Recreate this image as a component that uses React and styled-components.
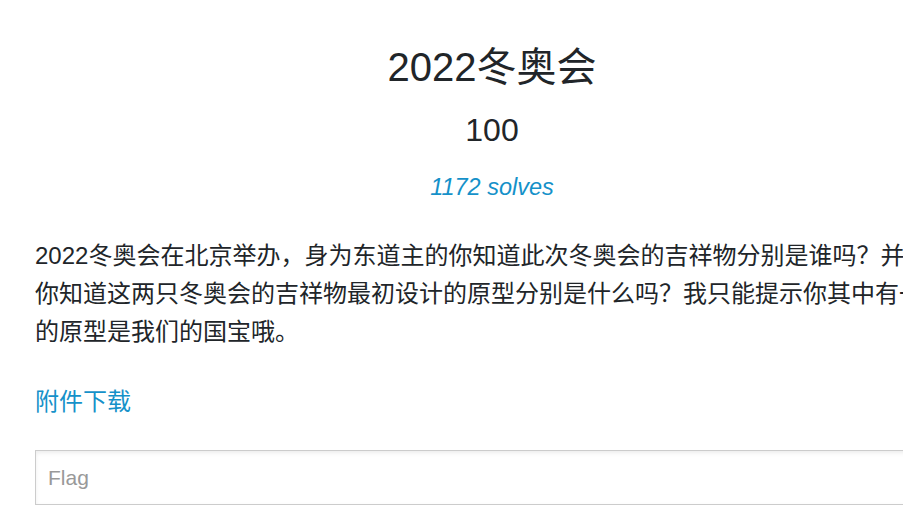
import styled, { createGlobalStyle } from 'styled-components';

const GlobalStyle = createGlobalStyle`
  html, body {
    margin: 0;
    padding: 0;
    overflow: hidden;
    background: #ffffff;
  }
  body {
    font-family: "Liberation Sans", "Noto Sans CJK SC", sans-serif;
    color: #212529;
  }
`;

const Challenge = () => {
  return (
    <StModal>
      <StTitle>2022冬奥会</StTitle>
      <StValue>100</StValue>
      <StSolves href="#solves">1172 solves</StSolves>
      <StDesc>
        2022冬奥会在北京举办，身为东道主的你知道此次冬奥会的吉祥物分别是谁吗？并且你知道这两只冬奥会的吉祥物最初设计的原型分别是什么吗？我只能提示你其中有一只的原型是我们的国宝哦。
      </StDesc>
      <StLink href="#file">附件下载</StLink>
      <StInput type="text" placeholder="Flag" />
    </StModal>
  );
};

const App = () => (
  <>
    <GlobalStyle />
    <Challenge />
  </>
);

export default App;

const StModal = styled.div`
  box-sizing: content-box;
  width: 914px;
  padding: 43px 0 0 35px;
  display: flex;
  flex-direction: column;
  align-items: flex-start;
`;

const StTitle = styled.h2`
  align-self: stretch;
  margin: 0;
  font-size: 40px;
  font-weight: 400;
  line-height: 48px;
  text-align: center;
`;

const StValue = styled.h4`
  align-self: stretch;
  margin: 20px 0 0;
  font-size: 32px;
  font-weight: 400;
  line-height: 38px;
  text-align: center;
`;

const StSolves = styled.a`
  align-self: center;
  margin-top: 21px;
  font-size: 23.5px;
  font-style: italic;
  line-height: 34px;
  color: #1591c9;
  text-decoration: none;
`;

const StDesc = styled.p`
  margin: 33px 0 0;
  font-size: 24px;
  line-height: 38px;
`;

const StLink = styled.a`
  margin-top: 33px;
  font-size: 24px;
  line-height: 36px;
  color: #1591c9;
  text-decoration: none;
`;

const StInput = styled.input`
  box-sizing: border-box;
  width: 100%;
  height: 55px;
  margin-top: 30px;
  padding: 0 12px;
  border: 1px solid #cccccc;
  border-radius: 0;
  box-shadow: inset 0 2px 4px rgba(0, 0, 0, 0.075);
  font-family: "Liberation Sans", "Noto Sans CJK SC", sans-serif;
  font-size: 21px;
  color: #212529;
  outline: none;

  &::placeholder {
    color: #999999;
  }
`;
